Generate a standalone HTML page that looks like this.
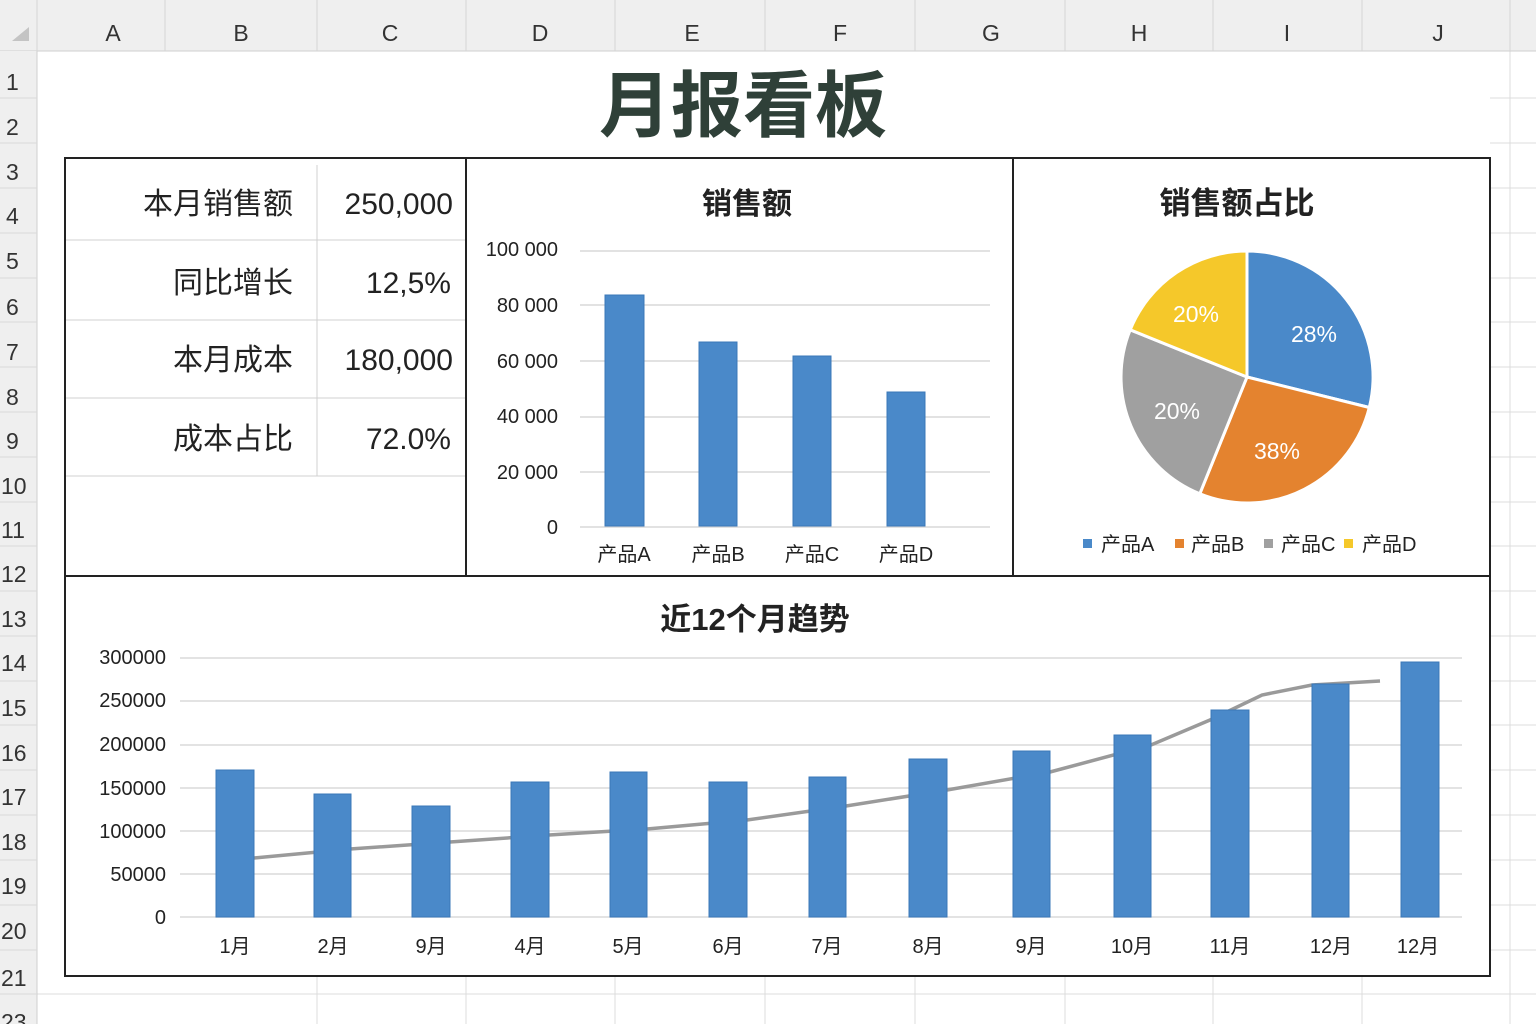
<!DOCTYPE html>
<html><head><meta charset="utf-8"><style>
html,body{margin:0;padding:0;background:#fff;}
svg{display:block;}
text{font-family:"Liberation Sans","Noto Sans CJK SC",sans-serif;}
</style></head><body>
<svg width="1536" height="1024" viewBox="0 0 1536 1024" xmlns="http://www.w3.org/2000/svg">
<rect width="1536" height="1024" fill="#fff"/>
<!-- sheet grid -->
<g stroke="#dcdcdc" stroke-width="1">
<line x1="1490" y1="98" x2="1536" y2="98"/><line x1="1490" y1="143" x2="1536" y2="143"/><line x1="1490" y1="188" x2="1536" y2="188"/><line x1="1490" y1="233" x2="1536" y2="233"/><line x1="1490" y1="278" x2="1536" y2="278"/><line x1="1490" y1="322" x2="1536" y2="322"/><line x1="1490" y1="367" x2="1536" y2="367"/><line x1="1490" y1="412" x2="1536" y2="412"/><line x1="1490" y1="457" x2="1536" y2="457"/><line x1="1490" y1="502" x2="1536" y2="502"/><line x1="1490" y1="546" x2="1536" y2="546"/><line x1="1490" y1="591" x2="1536" y2="591"/><line x1="1490" y1="636" x2="1536" y2="636"/><line x1="1490" y1="681" x2="1536" y2="681"/><line x1="1490" y1="725" x2="1536" y2="725"/><line x1="1490" y1="770" x2="1536" y2="770"/><line x1="1490" y1="815" x2="1536" y2="815"/><line x1="1490" y1="860" x2="1536" y2="860"/><line x1="1490" y1="905" x2="1536" y2="905"/><line x1="1490" y1="950" x2="1536" y2="950"/>
<line x1="37" y1="994" x2="1536" y2="994"/>
<line x1="1510" y1="50" x2="1510" y2="1024"/>
<line x1="317" y1="976" x2="317" y2="1024"/><line x1="466" y1="976" x2="466" y2="1024"/><line x1="615" y1="976" x2="615" y2="1024"/><line x1="765" y1="976" x2="765" y2="1024"/><line x1="915" y1="976" x2="915" y2="1024"/><line x1="1065" y1="976" x2="1065" y2="1024"/><line x1="1213" y1="976" x2="1213" y2="1024"/><line x1="1362" y1="976" x2="1362" y2="1024"/>
</g>
<!-- column header -->
<rect x="0" y="0" width="1536" height="51" fill="#efefef"/>
<line x1="0" y1="51" x2="1536" y2="51" stroke="#cfcfcf"/>
<g stroke="#d4d4d4"><line x1="37" y1="0" x2="37" y2="51"/><line x1="165" y1="0" x2="165" y2="51"/><line x1="317" y1="0" x2="317" y2="51"/><line x1="466" y1="0" x2="466" y2="51"/><line x1="615" y1="0" x2="615" y2="51"/><line x1="765" y1="0" x2="765" y2="51"/><line x1="915" y1="0" x2="915" y2="51"/><line x1="1065" y1="0" x2="1065" y2="51"/><line x1="1213" y1="0" x2="1213" y2="51"/><line x1="1362" y1="0" x2="1362" y2="51"/><line x1="1510" y1="0" x2="1510" y2="51"/></g>
<polygon points="12,41 29,41 29,27" fill="#c4c4c4"/>
<g font-size="23" fill="#333" text-anchor="middle">
<text x="113" y="41">A</text><text x="241" y="41">B</text><text x="390" y="41">C</text><text x="540" y="41">D</text><text x="692" y="41">E</text><text x="840" y="41">F</text><text x="991" y="41">G</text><text x="1139" y="41">H</text><text x="1287" y="41">I</text><text x="1438" y="41">J</text>
</g>
<!-- row header -->
<rect x="0" y="51" width="37" height="973" fill="#efefef"/>
<line x1="37" y1="51" x2="37" y2="1024" stroke="#cfcfcf"/>
<g stroke="#d8d8d8"><line x1="0" y1="98" x2="37" y2="98"/><line x1="0" y1="143" x2="37" y2="143"/><line x1="0" y1="188" x2="37" y2="188"/><line x1="0" y1="233" x2="37" y2="233"/><line x1="0" y1="278" x2="37" y2="278"/><line x1="0" y1="322" x2="37" y2="322"/><line x1="0" y1="367" x2="37" y2="367"/><line x1="0" y1="412" x2="37" y2="412"/><line x1="0" y1="457" x2="37" y2="457"/><line x1="0" y1="502" x2="37" y2="502"/><line x1="0" y1="546" x2="37" y2="546"/><line x1="0" y1="591" x2="37" y2="591"/><line x1="0" y1="636" x2="37" y2="636"/><line x1="0" y1="681" x2="37" y2="681"/><line x1="0" y1="725" x2="37" y2="725"/><line x1="0" y1="770" x2="37" y2="770"/><line x1="0" y1="815" x2="37" y2="815"/><line x1="0" y1="860" x2="37" y2="860"/><line x1="0" y1="905" x2="37" y2="905"/><line x1="0" y1="950" x2="37" y2="950"/><line x1="0" y1="994" x2="37" y2="994"/></g>
<g font-size="23" fill="#333">
<text x="6" y="90">1</text><text x="6" y="135">2</text><text x="6" y="180">3</text><text x="6" y="224">4</text><text x="6" y="269">5</text><text x="6" y="315">6</text><text x="6" y="360">7</text><text x="6" y="405">8</text><text x="6" y="449">9</text><text x="1" y="494">10</text><text x="1" y="538">11</text><text x="1" y="582">12</text><text x="1" y="627">13</text><text x="1" y="671">14</text><text x="1" y="716">15</text><text x="1" y="761">16</text><text x="1" y="805">17</text><text x="1" y="850">18</text><text x="1" y="894">19</text><text x="1" y="939">20</text><text x="1" y="986">21</text><text x="1" y="1030">23</text>
</g>
<!-- title -->
<text x="743" y="131" font-size="72" font-weight="bold" fill="#2f4038" text-anchor="middle">月报看板</text>
<!-- dashboard frame -->
<rect x="65" y="158" width="1425" height="818" fill="#fff" stroke="#222" stroke-width="2"/>
<line x1="65" y1="576" x2="1490" y2="576" stroke="#222" stroke-width="2"/>
<line x1="466" y1="158" x2="466" y2="576" stroke="#222" stroke-width="2"/>
<line x1="1013" y1="158" x2="1013" y2="576" stroke="#222" stroke-width="2"/>
<!-- KPI table -->
<g stroke="#d0d0d0"><line x1="66" y1="240" x2="465" y2="240"/><line x1="66" y1="320" x2="465" y2="320"/><line x1="66" y1="398" x2="465" y2="398"/><line x1="66" y1="476" x2="465" y2="476"/><line x1="317" y1="165" x2="317" y2="476"/></g>
<g font-size="30" fill="#222" text-anchor="end">
<text x="293" y="214">本月销售额</text><text x="453" y="214">250,000</text>
<text x="293" y="293">同比增长</text><text x="451" y="293">12,5%</text>
<text x="293" y="370">本月成本</text><text x="453" y="370">180,000</text>
<text x="293" y="449">成本占比</text><text x="451" y="449">72.0%</text>
</g>
<!-- bar chart -->
<text x="747" y="214" font-size="30" font-weight="bold" fill="#222" text-anchor="middle">销售额</text>
<g stroke="#d9d9d9" stroke-width="1.5"><line x1="580" y1="251" x2="990" y2="251"/><line x1="580" y1="305" x2="990" y2="305"/><line x1="580" y1="361" x2="990" y2="361"/><line x1="580" y1="417" x2="990" y2="417"/><line x1="580" y1="472" x2="990" y2="472"/><line x1="580" y1="527" x2="990" y2="527"/></g>
<g font-size="20" fill="#222" text-anchor="end">
<text x="558" y="256">100 000</text><text x="558" y="312">80 000</text><text x="558" y="368">60 000</text><text x="558" y="423">40 000</text><text x="558" y="479">20 000</text><text x="558" y="534">0</text>
</g>
<g fill="#4a89c9" stroke="#3b78b8"><rect x="605" y="295" width="39" height="231"/><rect x="699" y="342" width="38" height="184"/><rect x="793" y="356" width="38" height="170"/><rect x="887" y="392" width="38" height="134"/></g>
<g font-size="20" fill="#222" text-anchor="middle"><text x="624" y="561">产品A</text><text x="718" y="561">产品B</text><text x="812" y="561">产品C</text><text x="906" y="561">产品D</text></g>
<!-- pie -->
<text x="1237" y="214" font-size="31" font-weight="bold" fill="#222" text-anchor="middle">销售额占比</text>
<g stroke="#fff" stroke-width="3" stroke-linejoin="round">
<path d="M1247,377 L1247,251 A126,126 0 0 1 1369.3,407.5 Z" fill="#4a89c9"/>
<path d="M1247,377 L1369.3,407.5 A126,126 0 0 1 1199.8,493.8 Z" fill="#e4832f"/>
<path d="M1247,377 L1199.8,493.8 A126,126 0 0 1 1130.2,329.8 Z" fill="#a0a0a0"/>
<path d="M1247,377 L1130.2,329.8 A126,126 0 0 1 1247,251 Z" fill="#f5c82a"/>
</g>
<g font-size="23" fill="#fff" text-anchor="middle"><text x="1314" y="342">28%</text><text x="1196" y="322">20%</text><text x="1177" y="419">20%</text><text x="1277" y="459">38%</text></g>
<rect x="1083" y="539" width="9" height="9" fill="#4a89c9"/><rect x="1175" y="539" width="9" height="9" fill="#e4832f"/><rect x="1264" y="539" width="9" height="9" fill="#a0a0a0"/><rect x="1344" y="539" width="9" height="9" fill="#f5c82a"/>
<g font-size="20" fill="#222"><text x="1101" y="551">产品A</text><text x="1191" y="551">产品B</text><text x="1281" y="551">产品C</text><text x="1362" y="551">产品D</text></g>
<!-- trend chart -->
<text x="755" y="630" font-size="31" font-weight="bold" fill="#222" text-anchor="middle">近12个月趋势</text>
<g stroke="#dadada" stroke-width="1.5"><line x1="180" y1="658" x2="1462" y2="658"/><line x1="180" y1="701" x2="1462" y2="701"/><line x1="180" y1="745" x2="1462" y2="745"/><line x1="180" y1="788" x2="1462" y2="788"/><line x1="180" y1="831" x2="1462" y2="831"/><line x1="180" y1="874" x2="1462" y2="874"/><line x1="180" y1="917" x2="1462" y2="917"/></g>
<g font-size="20" fill="#222" text-anchor="end"><text x="166" y="664">300000</text><text x="166" y="707">250000</text><text x="166" y="751">200000</text><text x="166" y="795">150000</text><text x="166" y="838">100000</text><text x="166" y="881">50000</text><text x="166" y="924">0</text></g>
<polyline points="254,858 350,849 450,842 549,835 647,829 747,820 846,806 947,790 1050,772 1151,745 1210,720 1262,695 1312,685 1380,681" fill="none" stroke="#9a9a9a" stroke-width="3.5"/>
<g fill="#4a89c9" stroke="#3b78b8">
<rect x="216" y="770" width="38" height="147"/><rect x="314" y="794" width="37" height="123"/><rect x="412" y="806" width="38" height="111"/><rect x="511" y="782" width="38" height="135"/><rect x="610" y="772" width="37" height="145"/><rect x="709" y="782" width="38" height="135"/><rect x="809" y="777" width="37" height="140"/><rect x="909" y="759" width="38" height="158"/><rect x="1013" y="751" width="37" height="166"/><rect x="1114" y="735" width="37" height="182"/><rect x="1211" y="710" width="38" height="207"/><rect x="1312" y="684" width="37" height="233"/><rect x="1401" y="662" width="38" height="255"/>
</g>
<g font-size="20" fill="#222" text-anchor="middle"><text x="235" y="953">1月</text><text x="333" y="953">2月</text><text x="431" y="953">9月</text><text x="530" y="953">4月</text><text x="628" y="953">5月</text><text x="728" y="953">6月</text><text x="827" y="953">7月</text><text x="928" y="953">8月</text><text x="1031" y="953">9月</text><text x="1132" y="953">10月</text><text x="1230" y="953">11月</text><text x="1331" y="953">12月</text><text x="1418" y="953">12月</text></g>
</svg>
</body></html>
